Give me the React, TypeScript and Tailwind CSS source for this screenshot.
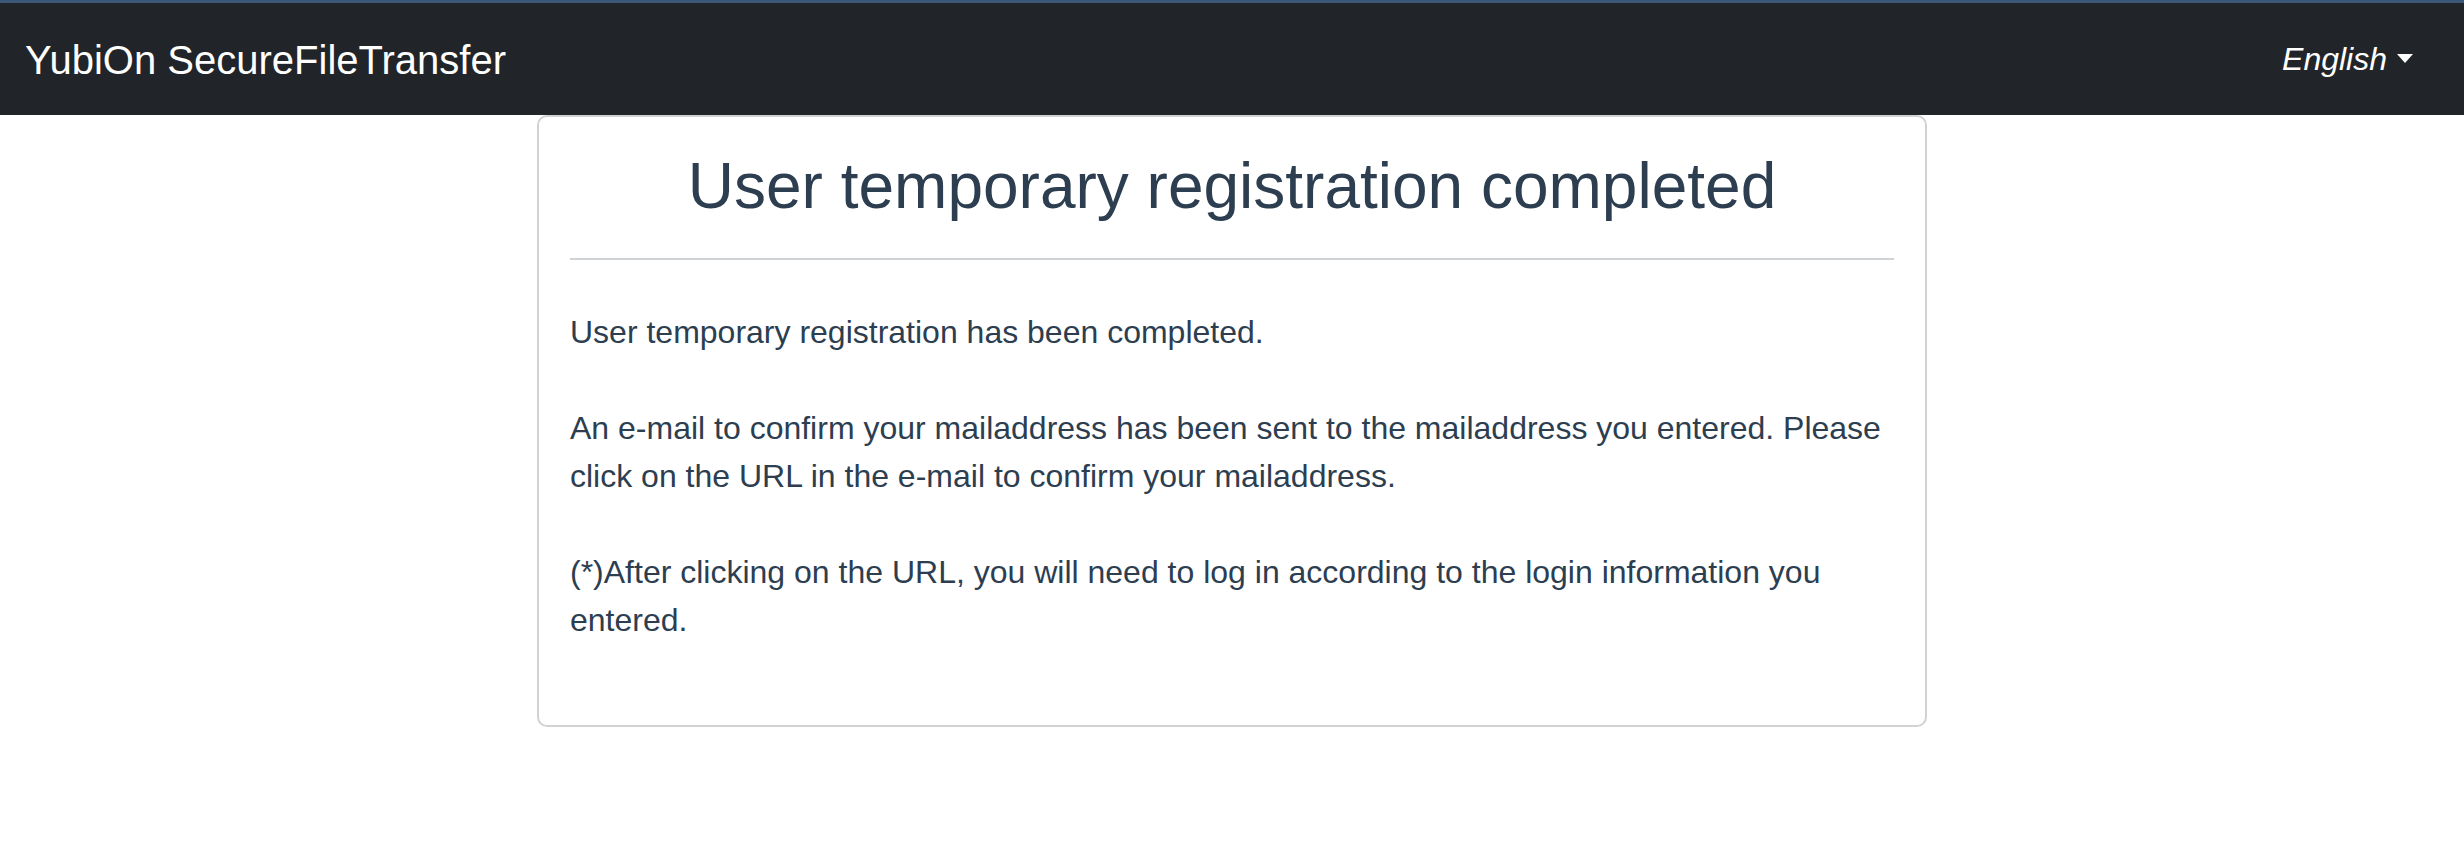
const paragraphs = [
  'User temporary registration has been completed.',
  'An e-mail to confirm your mailaddress has been sent to the mailaddress you entered. Please click on the URL in the e-mail to confirm your mailaddress.',
  '(*)After clicking on the URL, you will need to log in according to the login information you entered.',
];

function Navbar() {
  return (
    <nav className="flex h-[115px] items-center justify-between border-t-[3px] border-[#3b5878] bg-[#212529] pl-[25px] pr-[51px]">
      <a href="#" className="mt-[2px] text-[40px] leading-[1.2] text-white">
        YubiOn SecureFileTransfer
      </a>
      <button type="button" className="flex items-center text-[32px] italic leading-[1.5] text-white">
        English
        <span className="ml-[10px] mt-[-2px] h-0 w-0 border-x-[8px] border-t-[9px] border-x-transparent border-t-white" />
      </button>
    </nav>
  );
}

export default function App() {
  return (
    <div className="min-h-screen bg-white font-['Liberation_Sans',Arial,sans-serif]">
      <Navbar />

      <main className="mx-auto w-[1390px] rounded-[10px] border-2 border-[#d2d2d2] px-[31px] pb-[81px] pt-[31px] text-[#2c3e50]">
        <h1 className="text-center text-[64px] font-normal leading-[1.2]">
          User temporary registration completed
        </h1>
        <hr className="mt-[33px] border-t-2 border-[#cfd3d6]" />

        <div className="mt-[48px] text-[32px] leading-[48px]">
          {paragraphs.map((text, i) => (
            <p key={i} className={i < paragraphs.length - 1 ? 'mb-[48px]' : ''}>
              {text}
            </p>
          ))}
        </div>
      </main>
    </div>
  );
}
